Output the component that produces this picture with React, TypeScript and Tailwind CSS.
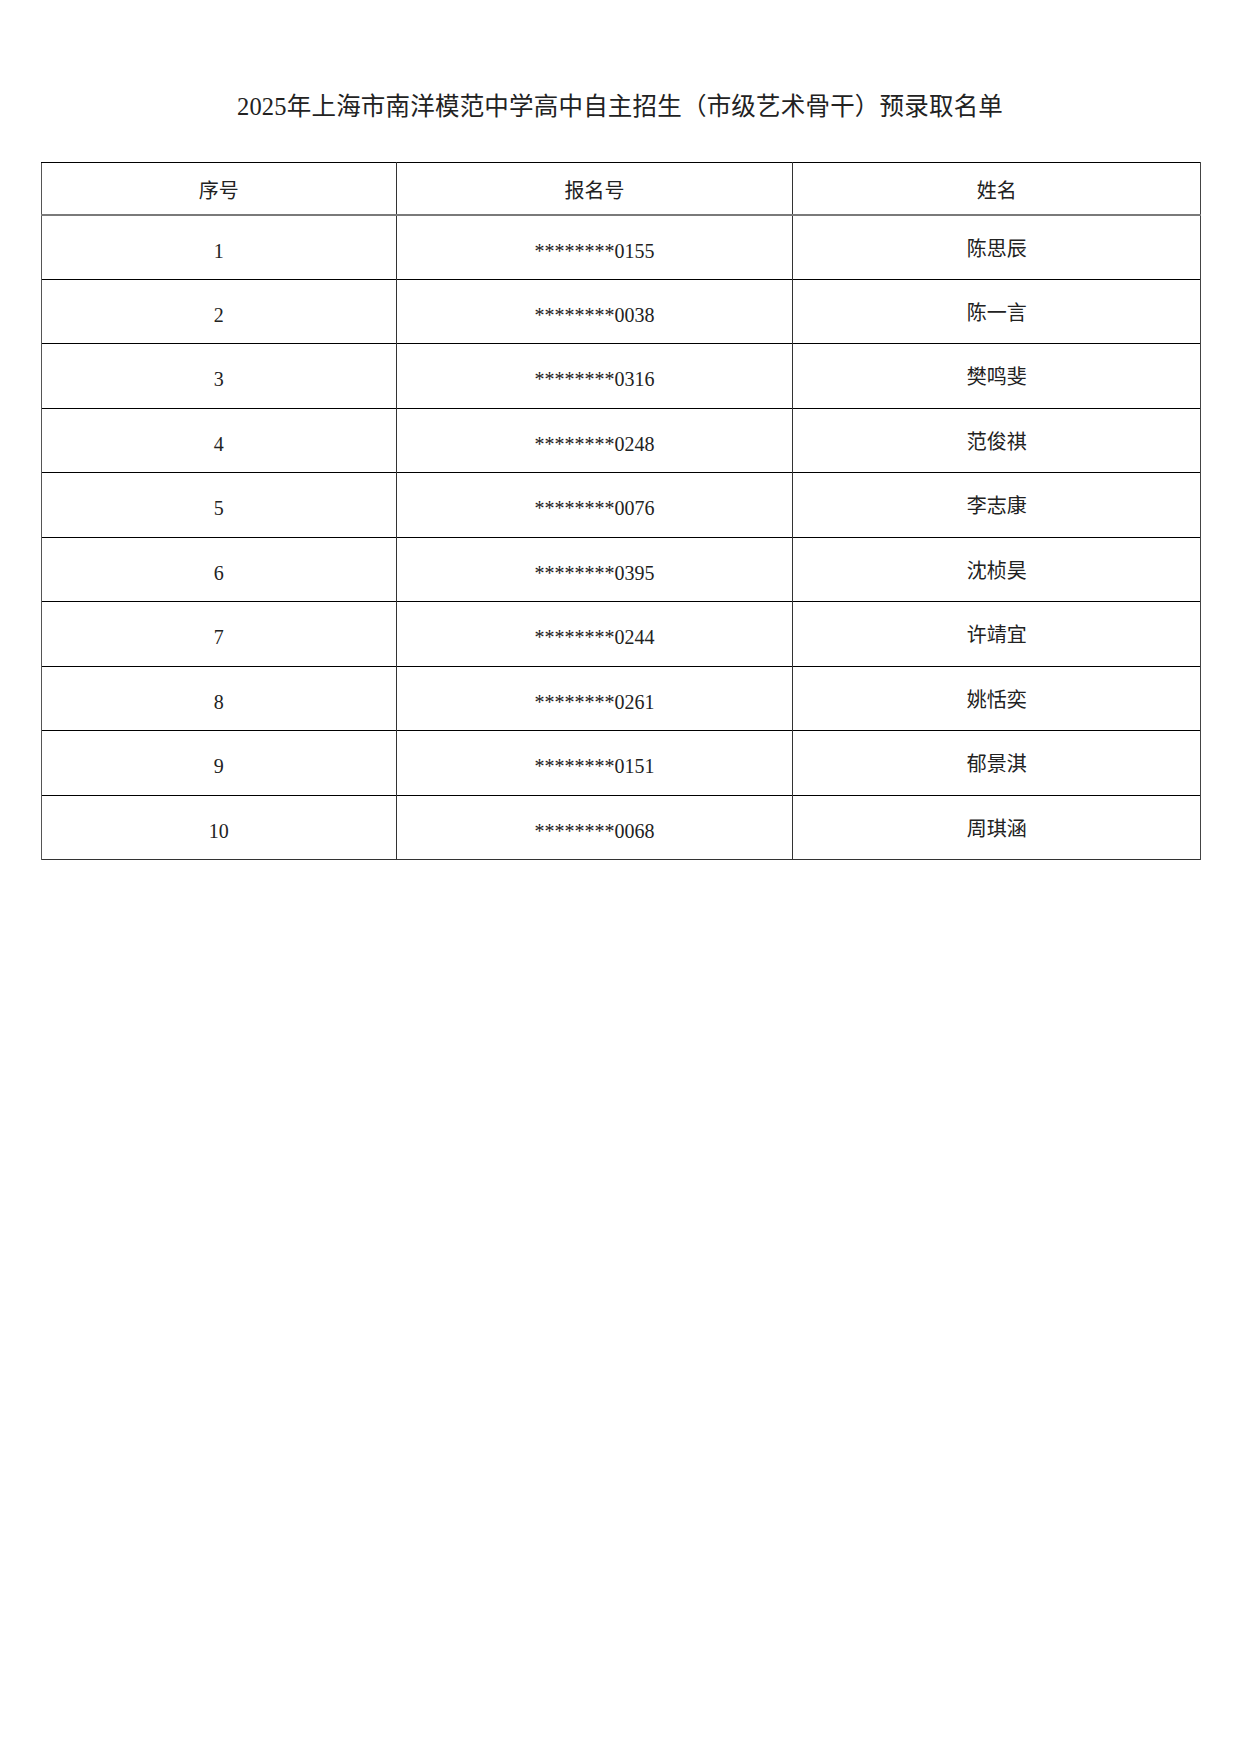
import React from 'react';

const rows = [
  { no: '1', id: '********0155', name: '陈思辰' },
  { no: '2', id: '********0038', name: '陈一言' },
  { no: '3', id: '********0316', name: '樊鸣斐' },
  { no: '4', id: '********0248', name: '范俊祺' },
  { no: '5', id: '********0076', name: '李志康' },
  { no: '6', id: '********0395', name: '沈桢昊' },
  { no: '7', id: '********0244', name: '许靖宜' },
  { no: '8', id: '********0261', name: '姚恬奕' },
  { no: '9', id: '********0151', name: '郁景淇' },
  { no: '10', id: '********0068', name: '周琪涵' },
];

const App: React.FC = () => {
  return (
    <div
      className="w-[1240px] min-h-[1754px] bg-white text-[#222]"
      style={{ fontFamily: '"Liberation Serif", "Noto Sans CJK SC", serif' }}
    >
      {/* Title */}
      <h1 className="pt-[92px] text-center text-[24.5px] leading-[30px] font-normal tracking-[0.2px]">
        2025年上海市南洋模范中学高中自主招生（市级艺术骨干）预录取名单
      </h1>

      {/* Table */}
      <div className="mt-[40px] px-[41px]">
        <table className="w-[1160px] border-collapse text-[20px] font-normal">
          <colgroup>
            <col className="w-[355px]" />
            <col className="w-[397px]" />
            <col className="w-[408px]" />
          </colgroup>
          <thead>
            <tr className="h-[52px] border-b-2 border-b-[#7a7a7a]">
              <th className="border-t border-t-black border-l-[1.5px] border-l-[#555] border-r border-r-[#333] font-normal pt-[5px]">序号</th>
              <th className="border-t border-t-black border-r border-r-[#333] font-normal pt-[5px]">报名号</th>
              <th className="border-t border-t-black border-r-[1.5px] border-r-[#444] font-normal pt-[5px]">姓名</th>
            </tr>
          </thead>
          <tbody>
            {rows.map((r, i) => (
              <tr
                key={r.no}
                className={
                  i === rows.length - 1
                    ? 'h-[64.5px] border-b-[1.5px] border-b-[#333]'
                    : 'h-[64.5px] border-b border-b-black'
                }
              >
                <td className="border-l-[1.5px] border-l-[#555] border-r border-r-[#333] text-center pt-[7px]">{r.no}</td>
                <td className="border-r border-r-[#333] text-center pt-[7px]">{r.id}</td>
                <td className="border-r-[1.5px] border-r-[#444] text-center pt-[3px]">{r.name}</td>
              </tr>
            ))}
          </tbody>
        </table>
      </div>
    </div>
  );
};

export default App;
